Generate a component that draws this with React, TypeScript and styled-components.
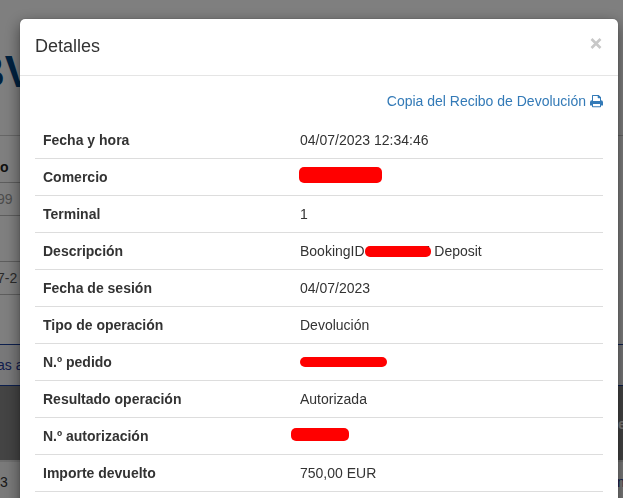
import React from "react";
import styled, { createGlobalStyle } from "styled-components";

const GlobalStyle = createGlobalStyle`
  * { box-sizing: border-box; }
  html, body { margin: 0; height: 100%; }
  body {
    overflow: hidden;
    background: #fff;
    color: #333;
    font-family: "Liberation Sans", Arial, sans-serif;
    font-size: 14px;
    line-height: 20px;
  }
`;

/* Page behind the dialog */
const Page = styled.div`
  overflow: hidden;
`;

const Masthead = styled.header`
  height: 136px;
  padding-top: 46px;
  border-bottom: 1px solid #ccc;
`;

const Brand = styled.div`
  margin-left: -27px;
  color: #004481;
  font-size: 44px;
  font-weight: bold;
  line-height: 52px;
`;

const Filters = styled.form`
  display: flex;
  flex-direction: column;
  align-items: flex-start;
  height: 208px;
  padding-top: 21px;
`;

const FilterLabel = styled.label`
  height: 25px;
  font-weight: bold;
  color: #222;
`;

const FilterInput = styled.input<{ $muted?: boolean }>`
  width: 240px;
  height: 34px;
  margin: 0 0 45px -3px;
  padding: 0;
  border: 1px solid #bbb;
  border-left: 0;
  background: #fff;
  color: ${(p) => (p.$muted ? "#999" : "#555")};
  font: inherit;
`;

const Notice = styled.a`
  display: block;
  height: 42px;
  margin-left: -3px;
  padding: 10px 0;
  border-top: 1px solid #1a3f9c;
  border-bottom: 1px solid #1a3f9c;
  background: #f0f0f2;
  color: #23399a;
  text-decoration: none;
`;

const GridHead = styled.div`
  display: flex;
  justify-content: flex-end;
  height: 76px;
  padding-top: 28px;
  border-bottom: 2px solid #ddd;
  background: #888;
  color: #fff;
  font-weight: bold;
`;

const Clip = styled.span`
  width: 5px;
`;

const GridRow = styled.div`
  display: flex;
  justify-content: space-between;
  height: 60px;
  padding-top: 10px;
  background: #f5f5f5;
`;

const RowLink = styled.a`
  width: 6px;
  color: #23399a;
  text-decoration: none;
`;

/* Dialog */
const Backdrop = styled.div`
  position: fixed;
  inset: 0;
  overflow: hidden;
  padding: 19px 5px 0 20px;
  background: rgba(0, 0, 0, 0.5);
`;

const Dialog = styled.section`
  min-height: 560px;
  border-radius: 5px;
  background: #fff;
  box-shadow: 0 5px 15px rgba(0, 0, 0, 0.5), 0 0 1px rgba(0, 0, 0, 0.6);
`;

const DialogHeader = styled.div`
  display: flex;
  align-items: flex-start;
  justify-content: space-between;
  height: 57px;
  padding: 15px;
  border-bottom: 1px solid #e5e5e5;
`;

const Title = styled.h4`
  margin: 0;
  font-size: 18px;
  font-weight: normal;
  line-height: 24px;
`;

const CloseButton = styled.button`
  display: flex;
  padding: 4px 1px;
  border: 0;
  background: none;
  color: #c8c8c8;
  cursor: pointer;
`;

const DialogBody = styled.div`
  padding: 15px;
`;

const Actions = styled.div`
  display: flex;
  justify-content: flex-end;
  margin-bottom: 11px;
`;

const PrintLink = styled.a`
  display: flex;
  align-items: center;
  gap: 4px;
  color: #337ab7;
  text-decoration: none;
`;

const Details = styled.table`
  width: 100%;
  border-collapse: separate;
  border-spacing: 0;
  table-layout: fixed;

  tr + tr > * {
    border-top: 1px solid #ddd;
  }
`;

const Name = styled.th`
  width: 257px;
  padding: 8px;
  text-align: left;
`;

const Value = styled.td`
  height: 36px;
  padding: 8px;
  white-space: nowrap;
`;

const Redaction = styled.span<{ $width: number; $height: number; $outdent?: number }>`
  position: relative;
  display: inline-block;
  vertical-align: middle;
  width: ${(p) => p.$width}px;
  height: ${(p) => p.$height}px;
  margin: ${(p) => (p.$height > 12 ? "-4px 0 2px" : "-2px 0 0")} -${(p) => p.$outdent ?? 0}px;
  border-radius: 5px;
  background: #f00;
`;

const Covered = styled.span`
  margin-left: -8px;
`;

const CloseIcon = () => (
  <svg width="12" height="11" viewBox="0 0 12 11" aria-hidden="true">
    <path d="M1.500 1L10.500 10M10.500 1L1.500 10" stroke="currentColor" strokeWidth="2.600" />
  </svg>
);

const PrintIcon = () => (
  <svg width="13" height="14" viewBox="0 0 13 14" aria-hidden="true">
    <path
      fill="currentColor"
      fillRule="evenodd"
      d="M2.700 1H8.700L11 3.300V6.300a2 2 0 0 1 2 2v3q0 .3-.3.3H11V12.500q0 .7-.7.7H2.700q-.7 0-.7-.7v-.9H.3q-.3 0-.3-.3V8.300a2 2 0 0 1 2-2V1.700Q2 1 2.700 1zM3 2v5h7V4.200H8.300Q7.700 4.200 7.700 3.600V2zM3 10v2.200h7V10z"
    />
  </svg>
);

const rows: { name: string; value: React.ReactNode }[] = [
  { name: "Fecha y hora", value: "04/07/2023 12:34:46" },
  { name: "Comercio", value: <Redaction $width={83} $height={16} $outdent={1} /> },
  { name: "Terminal", value: "1" },
  {
    name: "Descripción",
    value: (
      <>
        BookingID
        <Redaction $width={66} $height={11} />
        <Covered>5</Covered> Deposit
      </>
    ),
  },
  { name: "Fecha de sesión", value: "04/07/2023" },
  { name: "Tipo de operación", value: "Devolución" },
  { name: "N.º pedido", value: <Redaction $width={87} $height={10} /> },
  { name: "Resultado operación", value: "Autorizada" },
  { name: "N.º autorización", value: <Redaction $width={58} $height={13} $outdent={9} /> },
  { name: "Importe devuelto", value: "750,00 EUR" },
  { name: "", value: "" },
];

export default function App() {
  return (
    <>
      <GlobalStyle />
      <Page>
        <Masthead>
          <Brand>BV</Brand>
        </Masthead>
        <Filters>
          <FilterLabel htmlFor="code">o</FilterLabel>
          <FilterInput id="code" $muted defaultValue="99" />
          <FilterInput aria-label="Fecha" defaultValue="7-2" />
        </Filters>
        <Notice href="#">as a</Notice>
        <GridHead>
          <Clip>e</Clip>
        </GridHead>
        <GridRow>
          <span>3</span>
          <RowLink href="#">n</RowLink>
        </GridRow>
      </Page>
      <Backdrop>
        <Dialog role="dialog" aria-modal="true" aria-labelledby="dialog-title">
          <DialogHeader>
            <Title id="dialog-title">Detalles</Title>
            <CloseButton type="button" aria-label="Cerrar">
              <CloseIcon />
            </CloseButton>
          </DialogHeader>
          <DialogBody>
            <Actions>
              <PrintLink href="#">
                Copia del Recibo de Devolución
                <PrintIcon />
              </PrintLink>
            </Actions>
            <Details>
              <tbody>
                {rows.map((row, i) => (
                  <tr key={i}>
                    <Name scope="row">{row.name}</Name>
                    <Value>{row.value}</Value>
                  </tr>
                ))}
              </tbody>
            </Details>
          </DialogBody>
        </Dialog>
      </Backdrop>
    </>
  );
}
